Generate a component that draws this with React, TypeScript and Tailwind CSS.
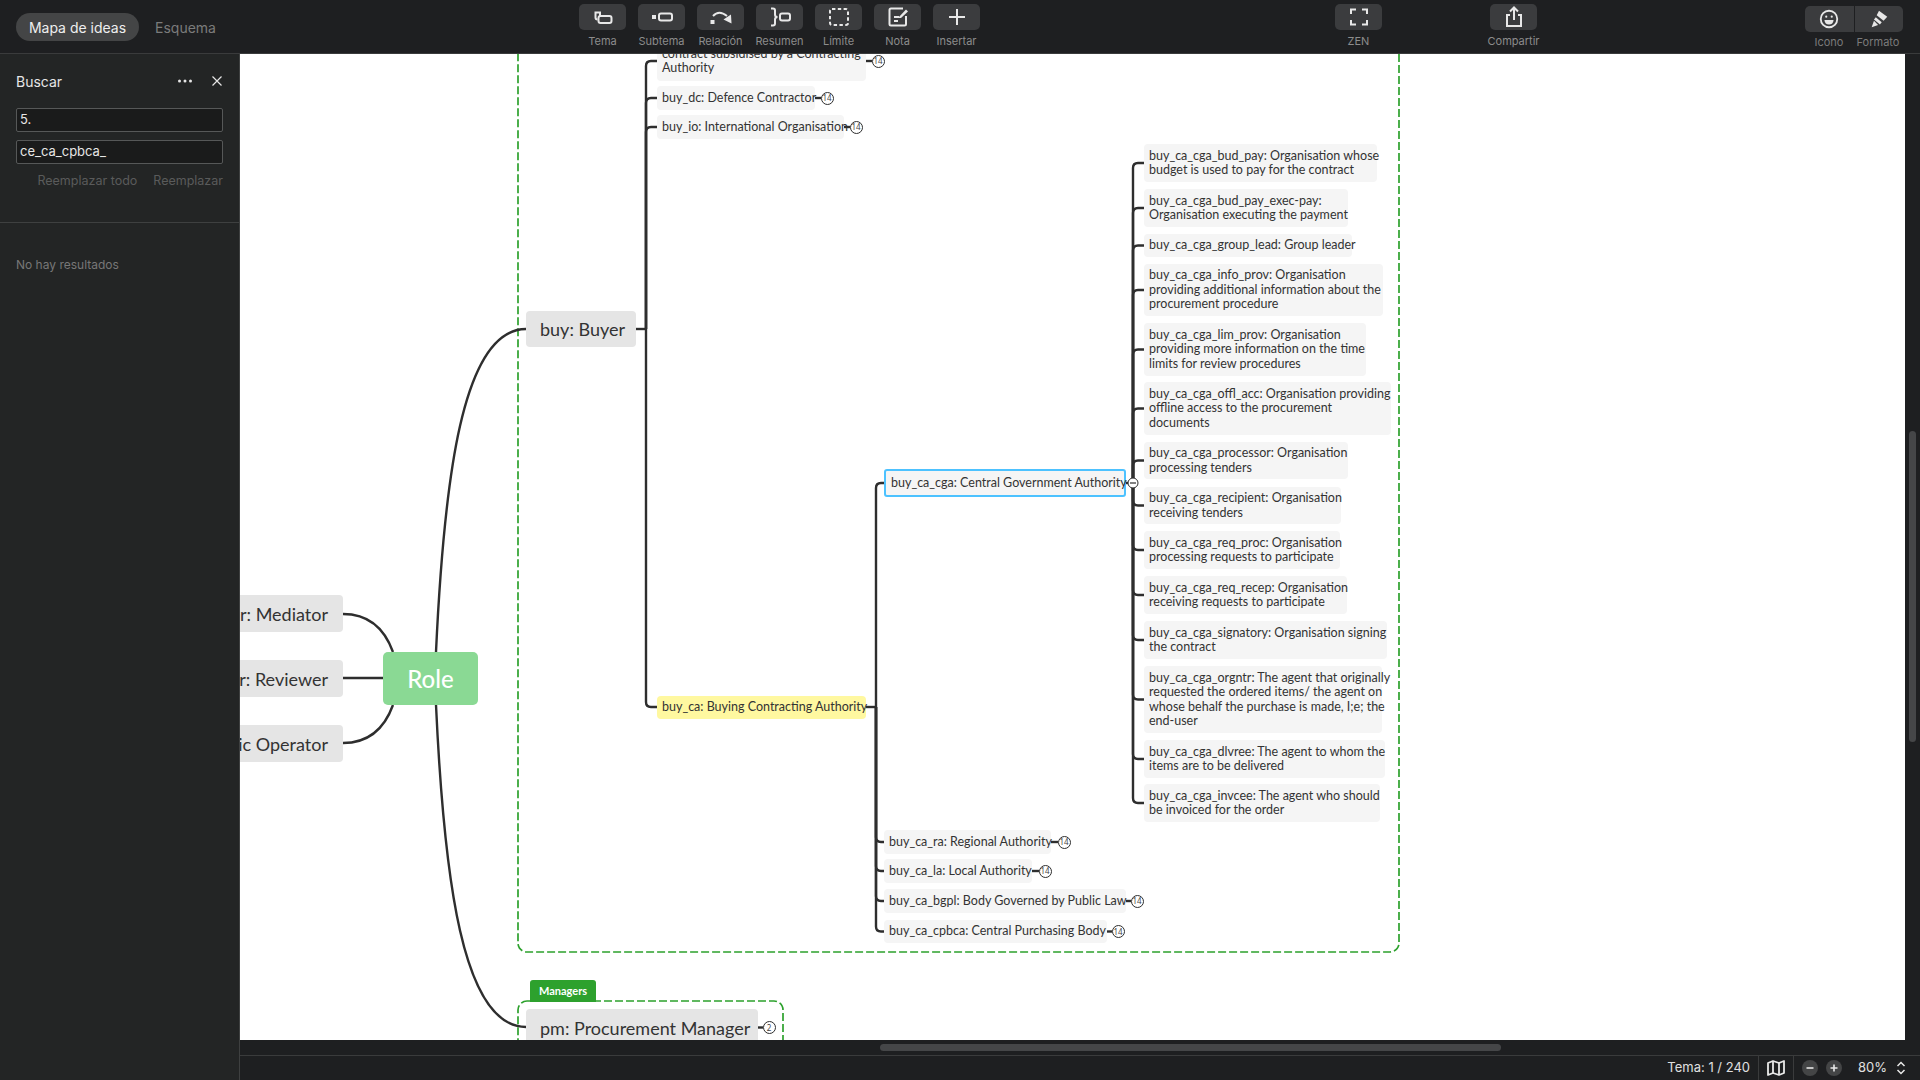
import React from "react";

type N = { x: number; y: number; r: number; b: number; lines: string[]; badge?: string; cx?: number };

const big: N[] = [
  { x: 526, y: 311, r: 636, b: 347, lines: ["buy: Buyer"] },
  { x: 526, y: 1009, r: 758, b: 1046, lines: ["pm: Procurement Manager"], badge: "2", cx: 769 },
];
const sideBig: N[] = [
  { x: 120, y: 595, r: 343, b: 632, lines: ["mdtr: Mediator"] },
  { x: 120, y: 660, r: 343, b: 697, lines: ["rvwr: Reviewer"] },
  { x: 120, y: 725, r: 343, b: 762, lines: ["eo: Economic Operator"] },
];
const col1: N[] = [
  { x: 657, y: 41, r: 866, b: 81, lines: ["contract subsidised by a Contracting", "Authority"], badge: "14", cx: 878 },
  { x: 657, y: 86, r: 815, b: 110, lines: ["buy_dc: Defence Contractor"], badge: "14", cx: 827 },
  { x: 657, y: 115, r: 844, b: 139, lines: ["buy_io: International Organisation"], badge: "14", cx: 856 },
];
const col2: N[] = [
  { x: 884, y: 830, r: 1051, b: 854, lines: ["buy_ca_ra: Regional Authority"], badge: "14", cx: 1064 },
  { x: 884, y: 859, r: 1032, b: 883, lines: ["buy_ca_la: Local Authority"], badge: "14", cx: 1045 },
  { x: 884, y: 889, r: 1126, b: 913, lines: ["buy_ca_bgpl: Body Governed by Public Law"], badge: "14", cx: 1137 },
  { x: 884, y: 920, r: 1107, b: 943, lines: ["buy_ca_cpbca: Central Purchasing Body"], badge: "14", cx: 1118 },
];
const col3: N[] = [
  { x: 1144, y: 144, r: 1377, b: 182, lines: ["buy_ca_cga_bud_pay: Organisation whose", "budget is used to pay for the contract"] },
  { x: 1144, y: 189, r: 1348, b: 227, lines: ["buy_ca_cga_bud_pay_exec-pay:", "Organisation executing the payment"] },
  { x: 1144, y: 234, r: 1352, b: 257, lines: ["buy_ca_cga_group_lead: Group leader"] },
  { x: 1144, y: 264, r: 1383, b: 316, lines: ["buy_ca_cga_info_prov: Organisation", "providing additional information about the", "procurement procedure"] },
  { x: 1144, y: 323, r: 1366, b: 376, lines: ["buy_ca_cga_lim_prov: Organisation", "providing more information on the time", "limits for review procedures"] },
  { x: 1144, y: 382, r: 1391, b: 435, lines: ["buy_ca_cga_offl_acc: Organisation providing", "offline access to the procurement", "documents"] },
  { x: 1144, y: 442, r: 1348, b: 479, lines: ["buy_ca_cga_processor: Organisation", "processing tenders"] },
  { x: 1144, y: 487, r: 1341, b: 524, lines: ["buy_ca_cga_recipient: Organisation", "receiving tenders"] },
  { x: 1144, y: 531, r: 1340, b: 569, lines: ["buy_ca_cga_req_proc: Organisation", "processing requests to participate"] },
  { x: 1144, y: 576, r: 1347, b: 614, lines: ["buy_ca_cga_req_recep: Organisation", "receiving requests to participate"] },
  { x: 1144, y: 621, r: 1387, b: 659, lines: ["buy_ca_cga_signatory: Organisation signing", "the contract"] },
  { x: 1144, y: 666, r: 1382, b: 733, lines: ["buy_ca_cga_orgntr: The agent that originally", "requested the ordered items/ the agent on", "whose behalf the purchase is made, I;e; the", "end-user"] },
  { x: 1144, y: 740, r: 1385, b: 778, lines: ["buy_ca_cga_dlvree: The agent to whom the", "items are to be delivered"] },
  { x: 1144, y: 784, r: 1380, b: 822, lines: ["buy_ca_cga_invcee: The agent who should", "be invoiced for the order"] },
];

const mid = (n: N) => (n.y + n.b) / 2;

function branch(tx: number, py: number, cy: number, ex: number) {
  const r = 5;
  if (Math.abs(cy - py) < 1) return `M${tx} ${py}L${ex} ${cy}`;
  const s = cy > py ? -1 : 1;
  return `M${tx} ${py}L${tx} ${cy + s * r}Q${tx} ${cy} ${tx + r} ${cy}L${ex} ${cy}`;
}

function Connectors() {
  const paths: string[] = [
    "M436 652C444 480 462 329 526 329",
    "M436 705C444 877 462 1027 526 1027",
    "M343 614C370 614 385 630 393 652",
    "M343 678L383 678",
    "M343 743C370 743 385 727 393 705",
    "M636 329L646 329",
    "M866 707L876 707",
    "M1126 483L1133 483",
    branch(646, 329, 707, 657),
    branch(876, 707, 483, 884),
    ...col1.map((n) => branch(646, 329, mid(n), n.x)),
    ...col2.map((n) => branch(876, 707, mid(n), n.x)),
    ...col3.map((n) => branch(1133, 483, mid(n), n.x)),
  ];
  return (
    <svg className="absolute left-0 top-0" width="1920" height="1080" fill="none">
      <rect x="518" y="-200" width="881" height="1152" rx="9" stroke="#2da12d" strokeWidth="1.7" strokeDasharray="8 3" />
      <rect x="518" y="1001" width="265" height="120" rx="9" stroke="#2da12d" strokeWidth="1.7" strokeDasharray="8 3" />
      {paths.map((d, i) => (
        <path key={i} d={d} stroke="#2e2e2e" strokeWidth="2.4" />
      ))}
      {[...col1, ...col2, ...big].filter((n) => n.badge).map((n, i) => (
        <path key={i} d={`M${n.r} ${mid(n)}L${n.cx! - 6} ${mid(n)}`} stroke="#2e2e2e" strokeWidth="2.4" />
      ))}
      <circle cx="1133" cy="483" r="5" fill="#fff" stroke="#2e2e2e" strokeWidth="1" />
      <path d="M1130 483H1136" stroke="#2e2e2e" strokeWidth="1.2" />
    </svg>
  );
}

function Node({ n, cls, text }: { n: N; cls: string; text: string }) {
  return (
    <>
      <div
        className={`absolute flex flex-col justify-center whitespace-nowrap rounded-[4px] ${cls}`}
        style={{ left: n.x, top: n.y, width: n.r - n.x, height: n.b - n.y }}
      >
        {n.lines.map((l) => (
          <div key={l} className={text}>{l}</div>
        ))}
      </div>
      {n.badge && (
        <div
          className="absolute flex h-[13px] w-[13px] items-center justify-center rounded-full border border-[#2e2e2e] bg-white text-[8px] leading-none text-[#444]"
          style={{ left: n.cx! - 6.5, top: mid(n) - 6.5 }}
        >
          {n.badge}
        </div>
      )}
    </>
  );
}

const smallText = "font-['Lato'] text-[12.5px] leading-[14.4px] text-[#333]";
const bigText = "font-['Lato'] text-[18px] leading-[22px] text-[#333]";

function Canvas() {
  return (
    <div className="relative min-w-0 flex-1 overflow-hidden bg-white">
      <div className="absolute -left-[240px] -top-[54px] h-[1080px] w-[1920px]">
        <Connectors />
        {sideBig.map((n) => (
          <Node key={n.lines[0]} n={n} cls="items-end bg-[#e5e5e5] pr-[15px]" text={bigText} />
        ))}
        {big.map((n) => (
          <Node key={n.lines[0]} n={n} cls="bg-[#e5e5e5] pl-[14px]" text={bigText} />
        ))}
        {[...col1, ...col2, ...col3].map((n) => (
          <Node key={n.lines[0]} n={n} cls="bg-[#f5f5f5] pl-[5px]" text={smallText} />
        ))}
        <Node
          n={{ x: 657, y: 696, r: 866, b: 719, lines: ["buy_ca: Buying Contracting Authority"] }}
          cls="bg-[#fff8a0] pl-[5px]"
          text={smallText}
        />
        <div className="absolute left-[884px] top-[469px] flex h-[28px] w-[242px] items-center whitespace-nowrap rounded-[3px] border-2 border-[#4dc2ff] bg-[#f5f5f5] pl-[5px]">
          <div className={smallText}>buy_ca_cga: Central Government Authority</div>
        </div>
        <div className="absolute left-[383px] top-[652px] flex h-[53px] w-[95px] items-center justify-center rounded-[5px] bg-[#8ad994] font-['Lato'] text-[24px] font-medium text-white">
          Role
        </div>
        <div className="absolute left-[530px] top-[980px] flex h-[22px] w-[66px] items-center justify-center rounded-t-[3px] bg-[#2da12d] font-['Lato'] text-[11px] font-bold text-white">
          Managers
        </div>
      </div>
    </div>
  );
}

const I = ({ children, w = 24 }: { children: React.ReactNode; w?: number }) => (
  <svg width={w} height={w} viewBox="0 0 24 24" fill="none" stroke="#e8e8e8" strokeWidth="2">
    {children}
  </svg>
);

const tools: [string, React.ReactNode][] = [
  ["Tema", <I><path d="M9 11V7.5H4.5V12.5Q4.5 14.5 6.5 14.5" /><rect x="7.5" y="11" width="13" height="7" rx="2" /></I>],
  ["Subtema", <I><rect x="2" y="10" width="4" height="4" fill="#e8e8e8" stroke="none" /><rect x="9" y="8.5" width="13" height="7" rx="2" /></I>],
  ["Relación", <I><rect x="1.5" y="15" width="4" height="4" fill="#e8e8e8" stroke="none" /><path d="M4 11Q10 4.5 18 11" /><path d="M14.5 14.5L22 9.5L22.5 18.5Z" fill="#e8e8e8" stroke="none" /></I>],
  ["Resumen", <I><path d="M3 3.5H5Q7 3.5 7 5.5V9.5Q7 12 9.5 12Q7 12 7 14.5V18.5Q7 20.5 5 20.5H3" /><rect x="12" y="8.5" width="10" height="7" rx="2" /></I>],
  ["Límite", <I><rect x="3" y="4" width="18" height="16" rx="2" strokeDasharray="3.4 2.4" /></I>],
  ["Nota", <I><path d="M20 11V19Q20 20.5 18.5 20.5H5Q3.5 20.5 3.5 19V5Q3.5 3.5 5 3.5H17" /><path d="M8 12H13M8 16H12" strokeWidth="1.8" /><path d="M12 13L20 4.5L22 6.5L15 13Z" fill="#e8e8e8" stroke="none" /></I>],
  ["Insertar", <I><path d="M12 4V20M4 12H20" /></I>],
];

function Tool({ label, icon, w = "w-[47px]" }: { label: string; icon: React.ReactNode; w?: string }) {
  return (
    <div className={`flex ${w} flex-col items-center`}>
      <div className="flex h-[26px] w-[47px] items-center justify-center rounded-[5px] bg-[#3b3c3e]">{icon}</div>
      <div className="mt-[4px] whitespace-nowrap text-[11px] leading-[14px] text-[#8c8c8c]">{label}</div>
    </div>
  );
}

function TopBar() {
  return (
    <div className="relative flex h-[54px] shrink-0 items-start border-b border-[#3a3b3c] bg-[#1e1f21] font-['Inter']">
      <div className="ml-[16px] mt-[13px] flex w-[563px] items-center">
        <div className="flex h-[28px] w-[123px] items-center justify-center rounded-full bg-[#444546] text-[14px] text-[#eee]">Mapa de ideas</div>
        <div className="ml-[16px] text-[14px] text-[#7b7b7b]">Esquema</div>
      </div>
      <div className="mt-[4px] flex gap-[12px]">
        {tools.map(([l, ic]) => (
          <Tool key={l} label={l} icon={ic} />
        ))}
      </div>
      <div className="ml-[355px] mt-[4px]">
        <Tool
          label="ZEN"
          icon={<I><path d="M4 9V4.5H9M15 4.5H20V9M20 15V19.5H15M9 19.5H4V15" /></I>}
        />
      </div>
      <div className="ml-[108px] mt-[4px]">
        <Tool
          label="Compartir"
          icon={<I><path d="M8 10H5V21H19V10H16" /><path d="M12 15V3M8 6.5L12 2.5L16 6.5" /></I>}
        />
      </div>
      <div className="ml-[268px] mt-[6px] flex flex-col">
        <div className="flex h-[26px] w-[98px] rounded-[5px] bg-[#3b3c3e]">
          <div className="flex flex-1 items-center justify-center border-r border-[#1e1f21]">
            <I w={22}>
              <circle cx="12" cy="12" r="9" />
              <circle cx="9" cy="9.5" r="1.2" fill="#e8e8e8" stroke="none" />
              <circle cx="15" cy="9.5" r="1.2" fill="#e8e8e8" stroke="none" />
              <path d="M7 13H17Q16.5 18 12 18Q7.5 18 7 13Z" fill="#e8e8e8" stroke="none" />
            </I>
          </div>
          <div className="flex flex-1 items-center justify-center">
            <I w={22}>
              <path d="M12 3L21 9.5L17 14L9.5 8Z" fill="#e8e8e8" stroke="none" />
              <path d="M8.5 10L15 15.5L13 18L6.5 12.5Z" fill="#e8e8e8" stroke="none" />
              <path d="M6.5 14L11 18.5L4 21Z" fill="#e8e8e8" stroke="none" />
            </I>
          </div>
        </div>
        <div className="mt-[3px] flex text-[11px] leading-[14px] text-[#7b7b7b]">
          <div className="w-[48px] text-center">Icono</div>
          <div className="w-[50px] text-center">Formato</div>
        </div>
      </div>
    </div>
  );
}

function SideBar() {
  return (
    <div className="flex w-[240px] shrink-0 flex-col border-r border-[#3e4040] bg-[#232525] font-['Inter']">
      <div className="flex h-[54px] shrink-0 items-center pl-[16px] pr-[16px]">
        <div className="flex-1 text-[14px] text-[#e6e6e6]">Buscar</div>
        <svg width="14" height="4" viewBox="0 0 14 4" className="mr-[20px]" fill="#e6e6e6">
          <rect x="0" y="0.5" width="3" height="3" rx="1.5" />
          <rect x="5.5" y="0.5" width="3" height="3" rx="1.5" />
          <rect x="11" y="0.5" width="3" height="3" rx="1.5" />
        </svg>
        <svg width="10" height="10" viewBox="0 0 10 10" stroke="#e6e6e6" strokeWidth="1.2" className="mr-[1px]">
          <path d="M0.5 0.5L9.5 9.5M9.5 0.5L0.5 9.5" />
        </svg>
      </div>
      <div className="flex flex-col gap-[8px] px-[16px]">
        <div className="flex h-[24px] w-[207px] items-center rounded-[2px] border border-[#565858] bg-[#1a1b1b] pl-[3px] text-[13px] text-[#e6e6e6]">5.</div>
        <div className="flex h-[24px] w-[207px] items-center rounded-[2px] border border-[#565858] bg-[#1a1b1b] pl-[3px] text-[13px] text-[#e6e6e6]">ce_ca_cpbca_</div>
      </div>
      <div className="mt-[9px] flex h-[16px] w-[223px] justify-end gap-[16px] text-[12.5px] leading-[16px] text-[#5a5b5b]">
        <span>Reemplazar todo</span>
        <span>Reemplazar</span>
      </div>
      <div className="mt-[33px] h-px w-full bg-[#3e4040]" />
      <div className="ml-[16px] mt-[34px] text-[12px] leading-[16px] text-[#777]">No hay resultados</div>
    </div>
  );
}

function Status() {
  return (
    <div className="flex h-[25px] shrink-0 items-center justify-end border-t border-[#3a3b3c] bg-[#1e1f21] font-['Inter'] text-[13px] text-[#e0e0e0]">
      <div className="flex h-full items-center border-r border-[#3a3b3c] pr-[8px]">Tema: 1 / 240</div>
      <div className="flex h-full w-[35px] items-center justify-center border-r border-[#3a3b3c]">
        <svg width="18" height="16" viewBox="0 0 18 16" fill="none" stroke="#e8e8e8" strokeWidth="1.8" strokeLinejoin="round">
          <path d="M1 3L6 1L12 3L17 1V13L12 15L6 13L1 15Z" />
          <path d="M6 1V13M12 3V15" />
        </svg>
      </div>
      <div className="ml-[8px] flex h-[16px] w-[16px] items-center justify-center rounded-full bg-[#444546]">
        <svg width="10" height="10" viewBox="0 0 10 10" stroke="#e8e8e8" strokeWidth="1.6"><path d="M1.5 5H8.5" /></svg>
      </div>
      <div className="ml-[8px] flex h-[16px] w-[16px] items-center justify-center rounded-full bg-[#444546]">
        <svg width="10" height="10" viewBox="0 0 10 10" stroke="#e8e8e8" strokeWidth="1.6"><path d="M1.5 5H8.5M5 1.5V8.5" /></svg>
      </div>
      <div className="ml-[16px] w-[27px] whitespace-nowrap">80%</div>
      <svg width="10" height="14" viewBox="0 0 10 14" fill="none" stroke="#e8e8e8" strokeWidth="1.5" className="ml-[11px] mr-[14px]">
        <path d="M1.5 5L5 1.5L8.5 5M1.5 9L5 12.5L8.5 9" />
      </svg>
    </div>
  );
}

export default function App() {
  return (
    <div className="flex h-[1080px] w-[1920px] flex-col overflow-hidden bg-[#1e1f21]">
      <TopBar />
      <div className="flex min-h-0 flex-1">
        <SideBar />
        <div className="flex min-w-0 flex-1 flex-col">
          <div className="flex min-h-0 flex-1">
            <Canvas />
            <div className="flex w-[15px] shrink-0 flex-col items-center bg-[#1e1f21] pt-[377px]">
              <div className="h-[311px] w-[7px] rounded-full bg-[#454648]" />
            </div>
          </div>
          <div className="flex h-[15px] shrink-0 items-center bg-[#1e1f21] pl-[640px]">
            <div className="h-[7px] w-[621px] rounded-full bg-[#454648]" />
          </div>
          <Status />
        </div>
      </div>
    </div>
  );
}
